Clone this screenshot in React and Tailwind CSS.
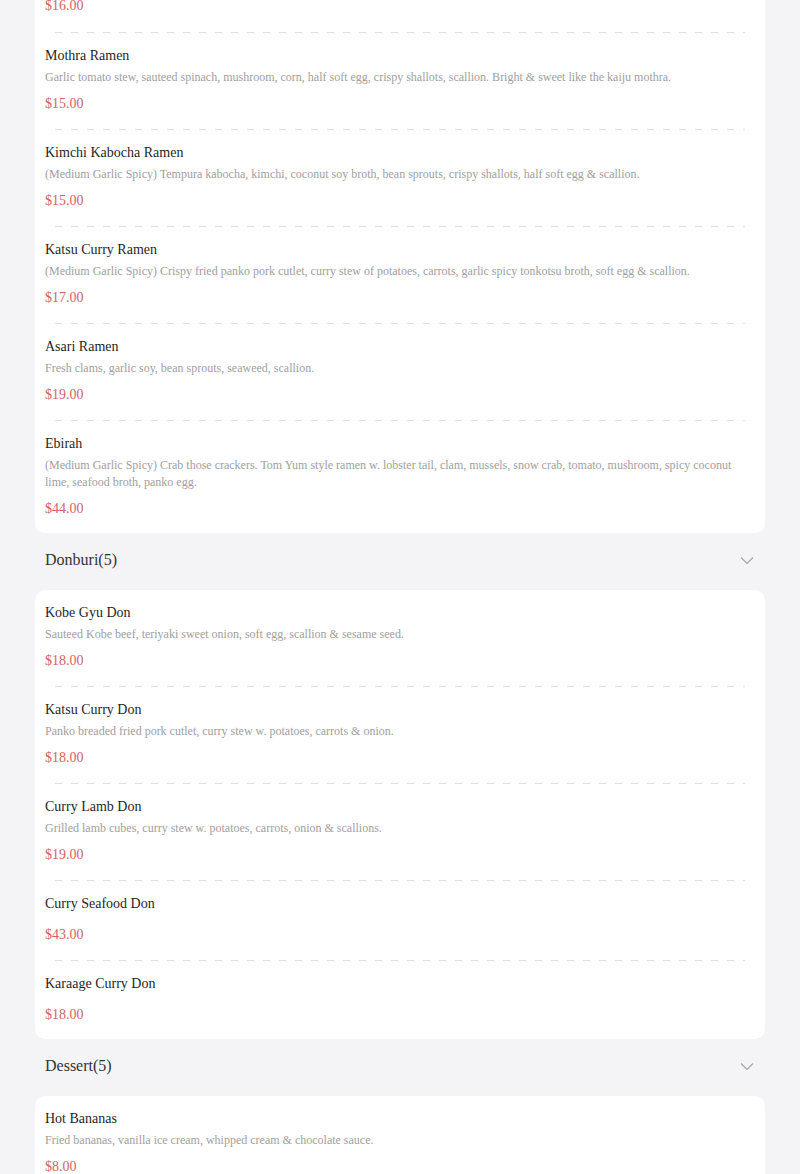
const sections = [
  {
    title: null,
    items: [
      { price: "$16.00", partial: true },
      {
        name: "Mothra Ramen",
        desc: "Garlic tomato stew, sauteed spinach, mushroom, corn, half soft egg, crispy shallots, scallion. Bright & sweet like the kaiju mothra.",
        price: "$15.00",
      },
      {
        name: "Kimchi Kabocha Ramen",
        desc: "(Medium Garlic Spicy) Tempura kabocha, kimchi, coconut soy broth, bean sprouts, crispy shallots, half soft egg & scallion.",
        price: "$15.00",
      },
      {
        name: "Katsu Curry Ramen",
        desc: "(Medium Garlic Spicy) Crispy fried panko pork cutlet, curry stew of potatoes, carrots, garlic spicy tonkotsu broth, soft egg & scallion.",
        price: "$17.00",
      },
      {
        name: "Asari Ramen",
        desc: "Fresh clams, garlic soy, bean sprouts, seaweed, scallion.",
        price: "$19.00",
      },
      {
        name: "Ebirah",
        desc: "(Medium Garlic Spicy) Crab those crackers. Tom Yum style ramen w. lobster tail, clam, mussels, snow crab, tomato, mushroom, spicy coconut lime, seafood broth, panko egg.",
        price: "$44.00",
      },
    ],
  },
  {
    title: "Donburi(5)",
    items: [
      {
        name: "Kobe Gyu Don",
        desc: "Sauteed Kobe beef, teriyaki sweet onion, soft egg, scallion & sesame seed.",
        price: "$18.00",
      },
      {
        name: "Katsu Curry Don",
        desc: "Panko breaded fried pork cutlet, curry stew w. potatoes, carrots & onion.",
        price: "$18.00",
      },
      {
        name: "Curry Lamb Don",
        desc: "Grilled lamb cubes, curry stew w. potatoes, carrots, onion & scallions.",
        price: "$19.00",
      },
      { name: "Curry Seafood Don", price: "$43.00" },
      { name: "Karaage Curry Don", price: "$18.00" },
    ],
  },
  {
    title: "Dessert(5)",
    items: [
      {
        name: "Hot Bananas",
        desc: "Fried bananas, vanilla ice cream, whipped cream & chocolate sauce.",
        price: "$8.00",
      },
      {
        name: "Mochi Ice Cream",
        desc: "Three pieces, ask for today's flavors.",
        price: "$7.00",
      },
    ],
  },
];

function Chevron() {
  return (
    <svg width="14" height="9" viewBox="0 0 14 9" fill="none" className="mr-[11px]">
      <polyline points="1,1.5 7,7.5 13,1.5" stroke="#a3a3a3" strokeWidth="1.2" />
    </svg>
  );
}

function Dash() {
  return (
    <div className="mx-[20px] h-px bg-[repeating-linear-gradient(90deg,#dedede_0_7px,transparent_7px_16px)]" />
  );
}

function Item({ item, last }) {
  if (item.partial) {
    return (
      <div className="px-[10px] pb-[16px]">
        <div className="-mt-[4px] text-[14px] leading-[20px] text-[#d26262]">{item.price}</div>
      </div>
    );
  }
  return (
    <div className={last ? "px-[10px] pt-[13px] pb-[14px]" : "px-[10px] pt-[13px] pb-[15px]"}>
      <div className="text-[14px] leading-[20px] text-[#1f1f1f]">{item.name}</div>
      {item.desc && (
        <div className="mt-[3px] text-[12px] leading-[17px] text-[#a0a0a0]">{item.desc}</div>
      )}
      <div
        className={
          item.desc
            ? "mt-[8px] text-[14px] leading-[20px] text-[#d26262]"
            : "mt-[11px] text-[14px] leading-[20px] text-[#d26262]"
        }
      >
        {item.price}
      </div>
    </div>
  );
}

export default function App() {
  return (
    <div className="min-h-screen bg-[#f4f4f6] px-[35px] font-['Liberation_Serif',serif]">
      {sections.map((s, si) => (
        <div key={si}>
          {s.title && (
            <div className="flex items-center justify-between pl-[10px] pt-[17px] pb-[20px]">
              <span className="text-[16px] leading-[20px] text-[#333]">{s.title}</span>
              <Chevron />
            </div>
          )}
          <div className={s.title ? "rounded-[10px] bg-white" : "rounded-b-[10px] bg-white"}>
            {s.items.map((it, i) => (
              <div key={i}>
                {i > 0 && <Dash />}
                <Item item={it} last={i === s.items.length - 1} />
              </div>
            ))}
          </div>
        </div>
      ))}
    </div>
  );
}
